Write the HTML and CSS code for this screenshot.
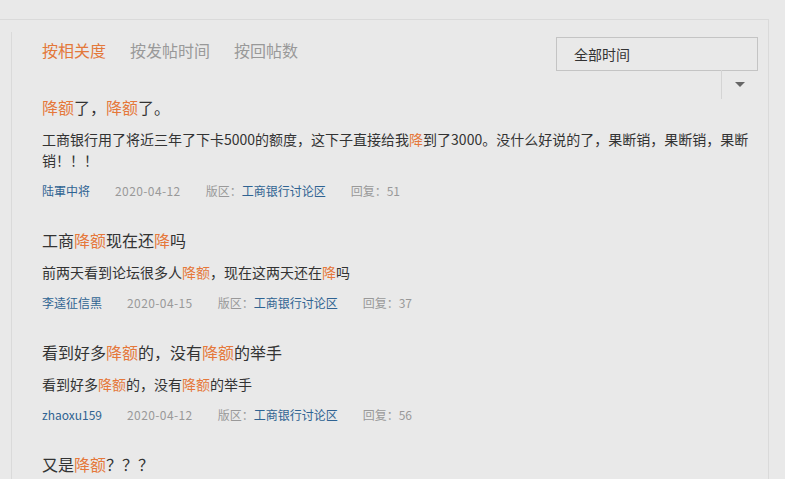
FILE: index.html
```html
<!DOCTYPE html>
<html lang="zh-CN">
<head>
    <meta charset="UTF-8">
    <meta name="viewport" content="width=device-width, initial-scale=1.0">
    <title>搜索结果 - 降额</title>
    <link rel="stylesheet" href="styles.css">
</head>
<body>
    <div class="panel">
        <div class="panel-inner">
            <div class="toolbar">
                <ul class="tabs">
                    <li class="active">按相关度</li>
                    <li>按发帖时间</li>
                    <li>按回帖数</li>
                </ul>
                <div class="select">
                    <span class="select-value">全部时间</span>
                    <span class="select-arrow"><i></i></span>
                </div>
            </div>

            <ul class="results">
                <li class="post">
                    <h3 class="post-title"><em>降额</em>了，<em>降额</em>了。</h3>
                    <p class="post-body">工商银行用了将近三年了下卡5000的额度，这下子直接给我<em>降</em>到了3000。没什么好说的了，果断销，果断销，果断销！！！</p>
                    <div class="post-meta">
                        <a class="author">陆軍中将</a>
                        <span class="date">2020-04-12</span>
                        <span>版区：<a>工商银行讨论区</a></span>
                        <span>回复：51</span>
                    </div>
                </li>
                <li class="post">
                    <h3 class="post-title">工商<em>降额</em>现在还<em>降</em>吗</h3>
                    <p class="post-body">前两天看到论坛很多人<em>降额</em>，现在这两天还在<em>降</em>吗</p>
                    <div class="post-meta">
                        <a class="author">李逵征信黑</a>
                        <span class="date">2020-04-15</span>
                        <span>版区：<a>工商银行讨论区</a></span>
                        <span>回复：37</span>
                    </div>
                </li>
                <li class="post">
                    <h3 class="post-title">看到好多<em>降额</em>的，没有<em>降额</em>的举手</h3>
                    <p class="post-body">看到好多<em>降额</em>的，没有<em>降额</em>的举手</p>
                    <div class="post-meta">
                        <a class="author">zhaoxu159</a>
                        <span class="date">2020-04-12</span>
                        <span>版区：<a>工商银行讨论区</a></span>
                        <span>回复：56</span>
                    </div>
                </li>
                <li class="post">
                    <h3 class="post-title">又是<em>降额</em>？？？</h3>
                </li>
            </ul>
        </div>
    </div>
</body>
</html>
```

FILE: styles.css
```css
body {
    font-family: "Noto Sans CJK SC", "Noto Sans", sans-serif;
    background: #e9e9e9;
    color: #333;
    margin: 0;
    padding: 19px 0 0;
    height: 460px;
    overflow: hidden;
}

ul {
    list-style: none;
    margin: 0;
    padding: 0;
}

em {
    font-style: normal;
    color: #e5783a;
}

a {
    color: #2f6392;
    text-decoration: none;
}

.panel {
    width: 769px;
    border-top: 1px solid #dadada;
    border-right: 1px solid #dadada;
    box-sizing: border-box;
}

.panel-inner {
    margin: 12px 0 0 11px;
    padding: 5px 10px 0 30px;
    border-left: 1px solid #dadada;
}

/* sort tabs + time filter */
.toolbar {
    display: flex;
    justify-content: space-between;
    align-items: flex-start;
    margin-bottom: 24px;
}

.tabs {
    display: flex;
    gap: 24px;
    margin-top: 1px;
}

.tabs li {
    font-size: 16px;
    line-height: 24px;
    color: #999;
}

.tabs li.active {
    color: #e3783a;
}

.select {
    position: relative;
    width: 202px;
    height: 34px;
    border: 1px solid #c4c4c4;
    box-sizing: border-box;
}

.select-value {
    display: block;
    padding-left: 17px;
    font-size: 14px;
    line-height: 32px;
    color: #333;
}

.select-arrow {
    position: absolute;
    top: 100%;
    right: -1px;
    width: 36px;
    height: 29px;
    border-left: 1px solid #d4d4d4;
    display: flex;
    align-items: center;
    justify-content: center;
}

.select-arrow i {
    width: 0;
    height: 0;
    border-left: 5px solid transparent;
    border-right: 5px solid transparent;
    border-top: 5px solid #666;
}

/* search results */
.post {
    padding-bottom: 27px;
}

.post-title {
    margin: 0 0 10px;
    font-size: 16px;
    font-weight: normal;
    line-height: 24px;
    color: #333;
}

.post-body {
    margin: 0 0 10px;
    font-size: 14px;
    line-height: 21px;
}

.post-meta {
    display: flex;
    gap: 25px;
    font-size: 12px;
    line-height: 20px;
    color: #999;
}

.post-meta .date {
    letter-spacing: 0.4px;
}
```
